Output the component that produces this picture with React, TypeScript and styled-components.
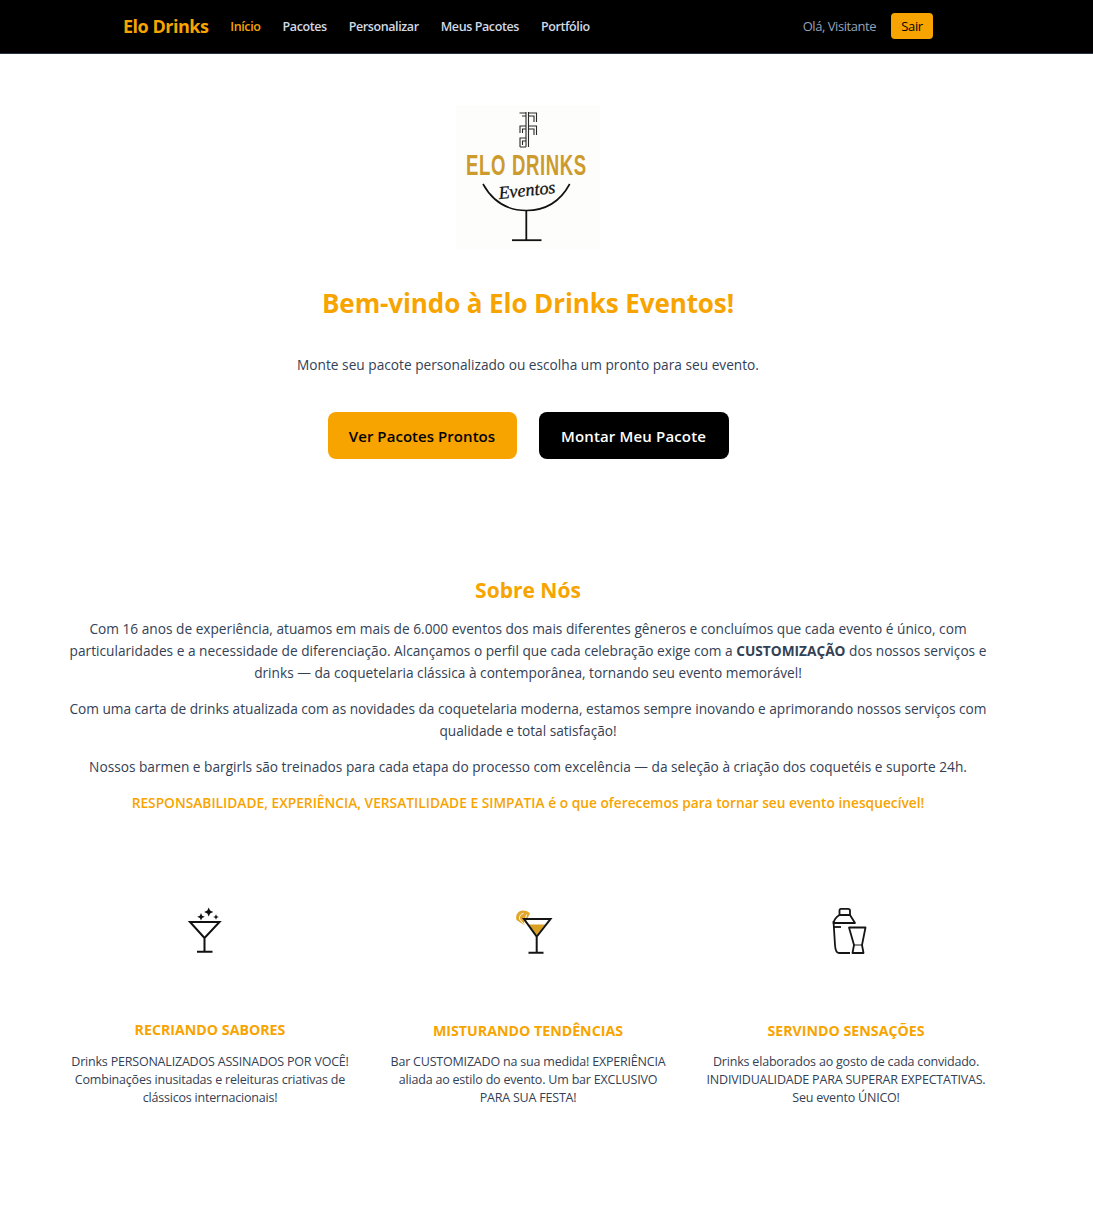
import React from "react";
import styled, { createGlobalStyle } from "styled-components";

const orange = "#f7a400";
const Global = createGlobalStyle`
  html, body { margin: 0; padding: 0; background: #fff; }
  body { font-family: "Open Sans", "Noto Sans", sans-serif; color: #334155; }
`;
const Page = styled.div`min-height: 1219px;`;
const Main = styled.main`width: 1056px;`;
const Nav = styled.nav`
  height: 54px; background: #000; border-bottom: 1px solid #2b3442;
  display: flex; padding: 0 160px 1px 123px; box-sizing: border-box;
`;
const NavInner = styled.div`width: 810px; display: flex; align-items: center;`;
const Brand = styled.a`font-size: 18px; font-weight: 700; color: ${orange}; margin-right: 22px; letter-spacing: -0.5px;`;
const NavLinks = styled.div`display: flex; gap: 22px; padding-top: 1px;`;
const NavLink = styled.a<{ $active?: boolean }>`
  font-size: 12.5px; font-weight: 600; letter-spacing: -0.4px;
  color: ${p => (p.$active ? orange : "#d1d9e6")};
`;
const NavRight = styled.div`margin-left: auto; display: flex; align-items: center; gap: 15px;`;
const Greeting = styled.span`font-size: 13px; color: #94a3b8; letter-spacing: -0.45px;`;
const Exit = styled.button`
  width: 42px; height: 26px; border: 0; border-radius: 4px; background: ${orange};
  color: #000; font: 400 13px "Open Sans", sans-serif; letter-spacing: -0.3px; padding: 0;
`;
const Hero = styled.section`display: flex; flex-direction: column; align-items: center; padding-top: 51px;`;
const LogoBox = styled.div`width: 144px; height: 144px; background: #fdfdfb; display: block;`;
const Title = styled.h1`font-size: 26px; line-height: 36px; font-weight: 700; color: ${orange}; margin: 36px 0 0; letter-spacing: -0.1px;`;
const Lead = styled.p`font-size: 13.7px; line-height: 22px; margin: 33px 0 0;`;
const Buttons = styled.div`display: flex; gap: 22px; margin-top: 36px;`;
const CTA = styled.button<{ $dark?: boolean }>`
  height: 47px; width: ${p => (p.$dark ? 190 : 189)}px; border: 0; border-radius: 8px;
  background: ${p => (p.$dark ? "#000" : orange)}; color: ${p => (p.$dark ? "#fff" : "#000")};
  font: 600 15px "Open Sans", sans-serif; padding: 0; letter-spacing: ${p => (p.$dark ? 0.15 : 0.05)}px;
`;
const About = styled.section`width: 960px; margin: 0 auto; padding-top: 115px; text-align: center;`;
const H2 = styled.h2`font-size: 21px; line-height: 32px; font-weight: 700; color: ${orange}; margin: 0 0 12px;`;
const AboutP = styled.p<{ $tight?: boolean }>`
  font-size: 13.7px; line-height: 22px; margin: 0 auto 14px; width: 930px;
  letter-spacing: ${p => (p.$tight ? -0.03 : 0)}px;
`;
const Highlight = styled(AboutP)`color: ${orange}; font-weight: 600; font-size: 13.75px;`;
const Cards = styled.section`
  width: 922px; margin: 81px auto 0; display: grid; grid-template-columns: repeat(3, 286px); column-gap: 32px;
`;
const Card = styled.article`text-align: center;`;
const Icon = styled.svg`display: block; margin: 0 auto;`;
const IconSlot = styled.div`height: 124px;`;
const CardTitle = styled.h3<{ $drop: number }>`
  font-size: 14.2px; line-height: 22px; font-weight: 700; color: ${orange};
  margin: ${p => p.$drop}px 0 ${p => 12 - p.$drop}px;
`;
const CardText = styled.p`font-size: 12.5px; line-height: 18px; margin: 0; letter-spacing: -0.2px;`;

const Logo = () => (
  <svg width="144" height="144" viewBox="0 0 144 144" role="img">
    <g fill="none" stroke="#2a2a2a" strokeWidth="1.100">
      <path d="M70 7V42M72.500 7V42" />
      <path d="M73 8H80.500V17M73 11H78V17M63.500 8H70M66 11H70" />
      <path d="M64 28V21H70M66.500 28V24H70M73 21H80.500V30M73 24H78V30" />
      <path d="M64 42V33H70M66.500 40V36H70M64 42H70" />
    </g>
    <g transform="translate(70.500 70.300) scale(0.64 1)">
      <text textAnchor="middle" fontFamily="'Liberation Sans',sans-serif" fontWeight="700" fontSize="29" letterSpacing="1" fill="#cd9a2e">ELO DRINKS</text>
    </g>
    <text x="71.500" y="91" textAnchor="middle" fontFamily="'Liberation Serif',serif" fontStyle="italic" fontSize="18" stroke="#111" strokeWidth="0.300" fill="#111" transform="rotate(-6 71 91)">Eventos</text>
    <path d="M27 79C37 97 52 105.500 70.300 105.500S104 97 113.700 79" fill="none" stroke="#111" strokeWidth="1.600" />
    <path d="M70.300 105V135" stroke="#111" strokeWidth="1.800" />
    <path d="M56 135.200H85.500" stroke="#111" strokeWidth="1.800" />
  </svg>
);

const Sparkle = ({ x, y, r }: { x: number; y: number; r: number }) => {
  const w = r * 0.3;
  return (
    <path d={`M${x} ${y - r}L${x + w} ${y - w}L${x + r} ${y}L${x + w} ${y + w}L${x} ${y + r}L${x - w} ${y + w}L${x - r} ${y}L${x - w} ${y - w}Z`} fill="#111" />
  );
};

const IconSparkle = () => (
  <Icon width="70" height="70" viewBox="5 0 70 70" fill="none">
    <Sparkle x={31} y={21.800} r={3.800} />
    <Sparkle x={38.700} y={17} r={4.600} />
    <Sparkle x={46} y={22} r={2.800} />
    <path d="M20 27H49.500L34.500 43ZM34.500 43V56.500M27 56.800H42.500" stroke="#111" strokeWidth="2" />
  </Icon>
);
const IconCitrus = () => (
  <Icon width="70" height="70" viewBox="-7 0 70 70" fill="none">
    <path d="M24 30L16.500 25C15 20 18 15.500 23 15.500C26 15.500 28.500 16.500 30 18.500Z" fill="#e2a62a" />
    <path d="M24 29.500L19.500 24C19 21 21 18.500 23.500 18.500M24 29.500L26.500 19.500" stroke="#fff" strokeWidth="0.900" />
    <path d="M28.500 29.500H45L36.700 40Z" fill="#d9a021" />
    <path d="M24 24H50.500L36.700 41.500ZM36.700 41.500V57.500M28.500 57.800H43.500" stroke="#151515" strokeWidth="2" />
  </Icon>
);
const IconShaker = () => (
  <Icon width="70" height="70" viewBox="-4 0 70 70" fill="none" stroke="#151515" strokeWidth="1.800" strokeLinejoin="round">
    <path d="M24.500 20V15.500Q24.500 13.800 26 13.800H33Q35 13.800 35 15.500V20" />
    <path d="M24.500 20H35L40 28H18.500Q19.500 23 24.500 20Z" />
    <path d="M18.500 26L20 50Q20.500 58 24 58H35" />
    <path d="M18.500 32H26" />
    <path d="M34 32.500H50.500L47 50L48.500 58H37.500L39 50Z" />
    <path d="M39 50H47" strokeWidth="1" />
  </Icon>
);

const cards = [
  { drop: 0, icon: <IconSparkle />, title: "RECRIANDO SABORES", text: "Drinks PERSONALIZADOS ASSINADOS POR VOCÊ! Combinações inusitadas e releituras criativas de clássicos internacionais!" },
  { drop: 1, icon: <IconCitrus />, title: "MISTURANDO TENDÊNCIAS", text: "Bar CUSTOMIZADO na sua medida! EXPERIÊNCIA aliada ao estilo do evento. Um bar EXCLUSIVO PARA SUA FESTA!" },
  { drop: 1, icon: <IconShaker />, title: "SERVINDO SENSAÇÕES", text: "Drinks elaborados ao gosto de cada convidado. INDIVIDUALIDADE PARA SUPERAR EXPECTATIVAS. Seu evento ÚNICO!" },
];

export default function App() {
  return (
    <Page>
      <Global />
      <Nav>
        <NavInner>
          <Brand>Elo Drinks</Brand>
          <NavLinks>
            <NavLink $active>Início</NavLink>
            <NavLink>Pacotes</NavLink>
            <NavLink>Personalizar</NavLink>
            <NavLink>Meus Pacotes</NavLink>
            <NavLink>Portfólio</NavLink>
          </NavLinks>
          <NavRight>
            <Greeting>Olá, Visitante</Greeting>
            <Exit>Sair</Exit>
          </NavRight>
        </NavInner>
      </Nav>
      <Main>
        <Hero>
          <LogoBox><Logo /></LogoBox>
          <Title>Bem-vindo à Elo Drinks Eventos!</Title>
          <Lead>Monte seu pacote personalizado ou escolha um pronto para seu evento.</Lead>
          <Buttons>
            <CTA>Ver Pacotes Prontos</CTA>
            <CTA $dark>Montar Meu Pacote</CTA>
          </Buttons>
        </Hero>
        <About>
          <H2>Sobre Nós</H2>
          <AboutP>Com 16 anos de experiência, atuamos em mais de 6.000 eventos dos mais diferentes gêneros e concluímos que cada evento é único, com particularidades e a necessidade de diferenciação. Alcançamos o perfil que cada celebração exige com a <strong>CUSTOMIZAÇÃO</strong> dos nossos serviços e drinks — da coquetelaria clássica à contemporânea, tornando seu evento memorável!</AboutP>
          <AboutP $tight>Com uma carta de drinks atualizada com as novidades da coquetelaria moderna, estamos sempre inovando e aprimorando nossos serviços com qualidade e total satisfação!</AboutP>
          <AboutP>Nossos barmen e bargirls são treinados para cada etapa do processo com excelência — da seleção à criação dos coquetéis e suporte 24h.</AboutP>
          <Highlight>RESPONSABILIDADE, EXPERIÊNCIA, VERSATILIDADE E SIMPATIA é o que oferecemos para tornar seu evento inesquecível!</Highlight>
        </About>
        <Cards>
          {cards.map(c => (
            <Card key={c.title}>
              <IconSlot>{c.icon}</IconSlot>
              <CardTitle $drop={c.drop}>{c.title}</CardTitle>
              <CardText>{c.text}</CardText>
            </Card>
          ))}
        </Cards>
      </Main>
    </Page>
  );
}
